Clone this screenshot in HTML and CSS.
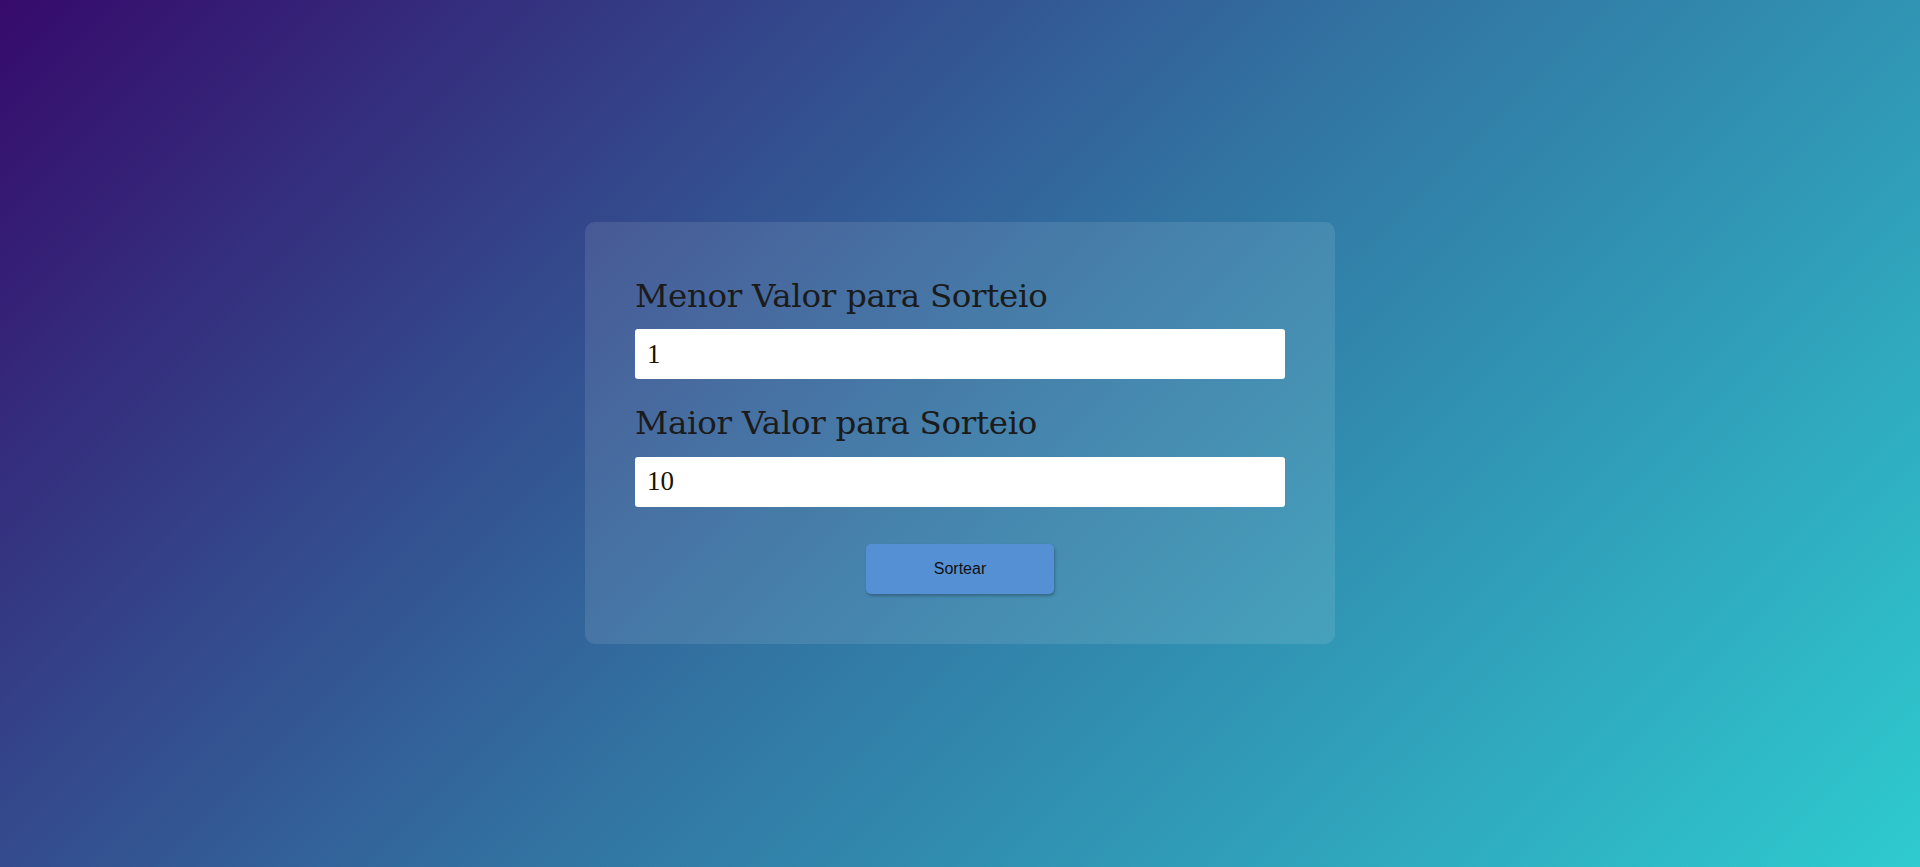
FILE: index.html
```html
<!DOCTYPE html>
<html lang="pt-BR">
<head>
<meta charset="utf-8">
<title>Sorteador</title>
<link rel="stylesheet" href="styles.css">
</head>
<body>
<main class="page">
  <form class="card">
    <label class="label" for="min">Menor Valor para Sorteio</label>
    <input class="field" id="min" type="text" value="1">
    <label class="label label-second" for="max">Maior Valor para Sorteio</label>
    <input class="field" id="max" type="text" value="10">
    <div class="actions">
      <button class="btn" type="button">Sortear</button>
    </div>
  </form>
</main>
</body>
</html>
```
FILE: styles.css
```css
* { box-sizing: border-box; }
html, body { margin: 0; padding: 0; height: 100%; }
body {
  background: linear-gradient(135deg, #360a6b 0%, #3273a2 50%, #2ecbd0 100%);
  font-family: "DejaVu Serif", serif;
}
.page {
  height: 867px;
  display: flex;
  align-items: center;
  justify-content: center;
}
.card {
  width: 750px;
  height: 422px;
  padding: 50px;
  border-radius: 10px;
  background: rgba(255, 255, 255, 0.1);
  display: flex;
  flex-direction: column;
  margin-top: -2px;
}
.label {
  display: block;
  height: 58px;
  font-size: 32.5px;
  line-height: 48px;
  color: #1b1b1b;
  letter-spacing: -0.3px;
}
.label-second { margin-top: 20px; }
.field {
  width: 650px;
  height: 50px;
  border: none;
  border-radius: 3px;
  background: #fff;
  padding: 0 12px;
  font-family: "Liberation Serif", serif;
  font-size: 27px;
  color: #1a1200;
  outline: none;
}
.actions {
  display: flex;
  justify-content: center;
  margin-top: 37px;
}
.btn {
  width: 188px;
  height: 50px;
  border: none;
  border-radius: 5px;
  background: #5590d4;
  color: #111;
  font-family: "Liberation Sans", Arial, sans-serif;
  font-size: 16px;
  box-shadow: 1px 2px 3px rgba(0, 0, 0, 0.25);
}
```
